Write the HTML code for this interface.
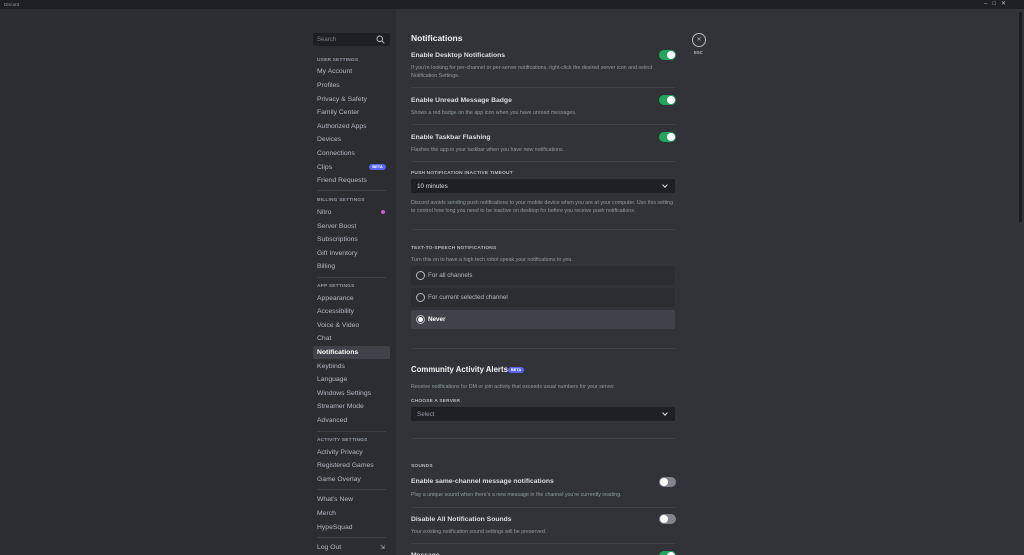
<!DOCTYPE html>
<html style="width:1024px;height:555px;overflow:hidden"><head><meta charset="utf-8"><style>
*{margin:0;padding:0;box-sizing:border-box}
body{width:1024px;height:555px;overflow:hidden;background:#313338;font-family:"Liberation Sans",sans-serif;position:relative}
.tb{position:absolute;left:0;top:0;width:1024px;height:9px;background:#1e1f22}
.sb{position:absolute;left:0;top:9px;width:396px;height:546px;background:#2b2d31}
.a{position:absolute;white-space:nowrap;line-height:10px}
.si{left:317px;font-size:6.8px;color:#b5bac1;margin-top:1px}
.sh{left:317px;font-size:4.8px;font-weight:bold;color:#949ba4;letter-spacing:.2px;margin-top:1px}
.sep{position:absolute;height:1px;background:#3f4147}
.t{left:411px;font-size:6.8px;color:#dbdee1;font-weight:bold;margin-top:1px}
.d{left:411px;font-size:5.3px;color:#949ba4;line-height:8px;margin-top:1px}
.h{left:411px;font-size:4.8px;font-weight:bold;color:#b5bac1;letter-spacing:.2px;margin-top:1px}
.tg{position:absolute;left:659px;width:17px;height:10px;border-radius:5px;background:#23a55a}
.tg::after{content:"";position:absolute;right:1px;top:1px;width:8px;height:8px;border-radius:50%;background:#fff}
.off{background:#80848e}.off::after{right:auto;left:1px}
.dd{position:absolute;left:411px;width:264px;height:14px;background:#1e1f22;border-radius:2px;font-size:6.3px;color:#dbdee1;padding-left:6px;line-height:15px}
.dd::after{content:"";position:absolute;right:8px;top:4px;width:3px;height:3px;border-right:1px solid #dbdee1;border-bottom:1px solid #dbdee1;transform:rotate(45deg)}
.rr{position:absolute;left:411px;width:264px;height:19px;background:#2b2d31;border-radius:2px;font-size:6.3px;color:#b5bac1;line-height:20px;padding-left:17px}
.rr::before{content:"";position:absolute;left:5px;top:5px;width:9px;height:9px;border:1px solid #b5bac1;border-radius:50%;box-sizing:border-box}
.beta{position:absolute;background:#5865f2;color:#fff;font-size:4px;font-weight:bold;border-radius:4px;text-align:center;line-height:6px}
</style></head><body>
<div class="tb"></div>
<div class="a" style="left:4px;top:0;font-size:4.5px;color:#949ba4;line-height:9px">Discord</div>
<div class="a" style="left:984px;top:0;font-size:6px;color:#b5bac1;line-height:9px">–&nbsp;&nbsp;&nbsp;□&nbsp;&nbsp;&nbsp;✕</div>
<div class="sb"></div>
<div style="position:absolute;left:313px;top:33px;width:77px;height:13px;background:#1e1f22;border-radius:2px"></div>
<div class="a" style="left:317px;top:35px;font-size:6px;color:#80848e">Search</div>
<svg style="position:absolute;left:376px;top:35px" width="9" height="9" viewBox="0 0 9 9"><circle cx="3.8" cy="3.8" r="2.8" fill="none" stroke="#b5bac1" stroke-width="1"/><path d="M6 6L8.3 8.3" stroke="#b5bac1" stroke-width="1"/></svg>
<div class="a sh" style="top:55px">USER SETTINGS</div>
<div class="a si" style="top:66px">My Account</div>
<div class="a si" style="top:80px">Profiles</div>
<div class="a si" style="top:94px">Privacy &amp; Safety</div>
<div class="a si" style="top:107px">Family Center</div>
<div class="a si" style="top:121px">Authorized Apps</div>
<div class="a si" style="top:134px">Devices</div>
<div class="a si" style="top:148px">Connections</div>
<div class="a si" style="top:162px">Clips</div>
<div class="beta" style="left:369px;top:164px;width:17px">BETA</div>
<div class="a si" style="top:175px">Friend Requests</div>
<div class="sep" style="left:317px;top:190px;width:69px"></div>
<div class="a sh" style="top:195px">BILLING SETTINGS</div>
<div class="a si" style="top:207px">Nitro</div>
<div style="position:absolute;left:381px;top:210px;width:4px;height:4px;border-radius:50%;background:#c85cd6"></div>
<div class="a si" style="top:221px">Server Boost</div>
<div class="a si" style="top:234px">Subscriptions</div>
<div class="a si" style="top:248px">Gift Inventory</div>
<div class="a si" style="top:261px">Billing</div>
<div class="sep" style="left:317px;top:277px;width:69px"></div>
<div class="a sh" style="top:281px">APP SETTINGS</div>
<div class="a si" style="top:293px">Appearance</div>
<div class="a si" style="top:306px">Accessibility</div>
<div class="a si" style="top:320px">Voice &amp; Video</div>
<div class="a si" style="top:333px">Chat</div>
<div style="position:absolute;left:313px;top:346px;width:77px;height:13px;background:#404249;border-radius:2px"></div>
<div class="a si" style="top:347px;color:#fff;font-weight:bold">Notifications</div>
<div class="a si" style="top:361px">Keybinds</div>
<div class="a si" style="top:374px">Language</div>
<div class="a si" style="top:388px">Windows Settings</div>
<div class="a si" style="top:401px">Streamer Mode</div>
<div class="a si" style="top:415px">Advanced</div>
<div class="sep" style="left:317px;top:431px;width:69px"></div>
<div class="a sh" style="top:435px">ACTIVITY SETTINGS</div>
<div class="a si" style="top:447px">Activity Privacy</div>
<div class="a si" style="top:460px">Registered Games</div>
<div class="a si" style="top:474px">Game Overlay</div>
<div class="sep" style="left:317px;top:489px;width:69px"></div>
<div class="a si" style="top:494px">What's New</div>
<div class="a si" style="top:508px">Merch</div>
<div class="a si" style="top:522px">HypeSquad</div>
<div class="sep" style="left:317px;top:537px;width:69px"></div>
<div class="a si" style="top:542px">Log Out</div>
<div class="a" style="left:380px;top:543px;font-size:6px;color:#b5bac1">⇲</div>

<div class="a" style="left:411px;top:33px;font-size:8.5px;font-weight:bold;color:#f2f3f5">Notifications</div>
<div style="position:absolute;left:692px;top:33px;width:14px;height:14px;border:1px solid #b5bac1;border-radius:50%;color:#b5bac1;font-size:6px;text-align:center;line-height:12px">✕</div>
<div class="a" style="left:694px;top:48px;font-size:4.3px;font-weight:bold;color:#b5bac1">ESC</div>
<div style="position:absolute;left:1019px;top:12px;width:3px;height:210px;background:#1a1b1e;border-radius:2px"></div>

<div class="a t" style="top:50px">Enable Desktop Notifications</div><div class="tg" style="top:50px"></div>
<div class="a d" style="top:63px">If you're looking for per-channel or per-server notifications, right-click the desired server icon and select<br>Notification Settings.</div>
<div class="sep" style="left:411px;top:87px;width:264px"></div>
<div class="a t" style="top:95px">Enable Unread Message Badge</div><div class="tg" style="top:95px"></div>
<div class="a d" style="top:108px">Shows a red badge on the app icon when you have unread messages.</div>
<div class="sep" style="left:411px;top:124px;width:264px"></div>
<div class="a t" style="top:132px">Enable Taskbar Flashing</div><div class="tg" style="top:132px"></div>
<div class="a d" style="top:145px">Flashes the app in your taskbar when you have new notifications.</div>
<div class="sep" style="left:411px;top:161px;width:264px"></div>
<div class="a h" style="top:168px">PUSH NOTIFICATION INACTIVE TIMEOUT</div>
<div class="dd" style="top:179px">10 minutes</div>
<div class="a d" style="top:198px">Discord avoids sending push notifications to your mobile device when you are at your computer. Use this setting<br>to control how long you need to be inactive on desktop for before you receive push notifications.</div>
<div class="sep" style="left:411px;top:229px;width:264px"></div>
<div class="a h" style="top:243px">TEXT-TO-SPEECH NOTIFICATIONS</div>
<div class="a d" style="top:255px">Turn this on to have a high tech robot speak your notifications to you.</div>
<div class="rr" style="top:266px">For all channels</div>
<div class="rr" style="top:288px">For current selected channel</div>
<div class="rr" style="top:310px;background:#404249;color:#fff;font-weight:bold">Never</div>
<div style="position:absolute;left:418px;top:317px;width:5px;height:5px;border-radius:50%;background:#fff"></div>
<div class="sep" style="left:411px;top:348px;width:264px"></div>
<div class="a" style="left:411px;top:365px;font-size:7.8px;font-weight:bold;color:#f2f3f5">Community Activity Alerts</div>
<div class="beta" style="left:508px;top:367px;width:16px">BETA</div>
<div class="a d" style="top:382px">Receive notifications for DM or join activity that exceeds usual numbers for your server.</div>
<div class="a h" style="top:396px">CHOOSE A SERVER</div>
<div class="dd" style="top:407px;color:#949ba4">Select</div>
<div class="sep" style="left:411px;top:438px;width:264px"></div>
<div class="a h" style="top:461px">SOUNDS</div>
<div class="a t" style="top:476px">Enable same-channel message notifications</div><div class="tg off" style="top:477px"></div>
<div class="a d" style="top:490px">Play a unique sound when there's a new message in the channel you're currently reading.</div>
<div class="sep" style="left:411px;top:507px;width:264px"></div>
<div class="a t" style="top:514px">Disable All Notification Sounds</div><div class="tg off" style="top:514px"></div>
<div class="a d" style="top:527px">Your existing notification sound settings will be preserved.</div>
<div class="sep" style="left:411px;top:543px;width:264px"></div>
<div class="a t" style="top:550px">Message</div><div class="tg" style="top:551px"></div>
</body></html>
